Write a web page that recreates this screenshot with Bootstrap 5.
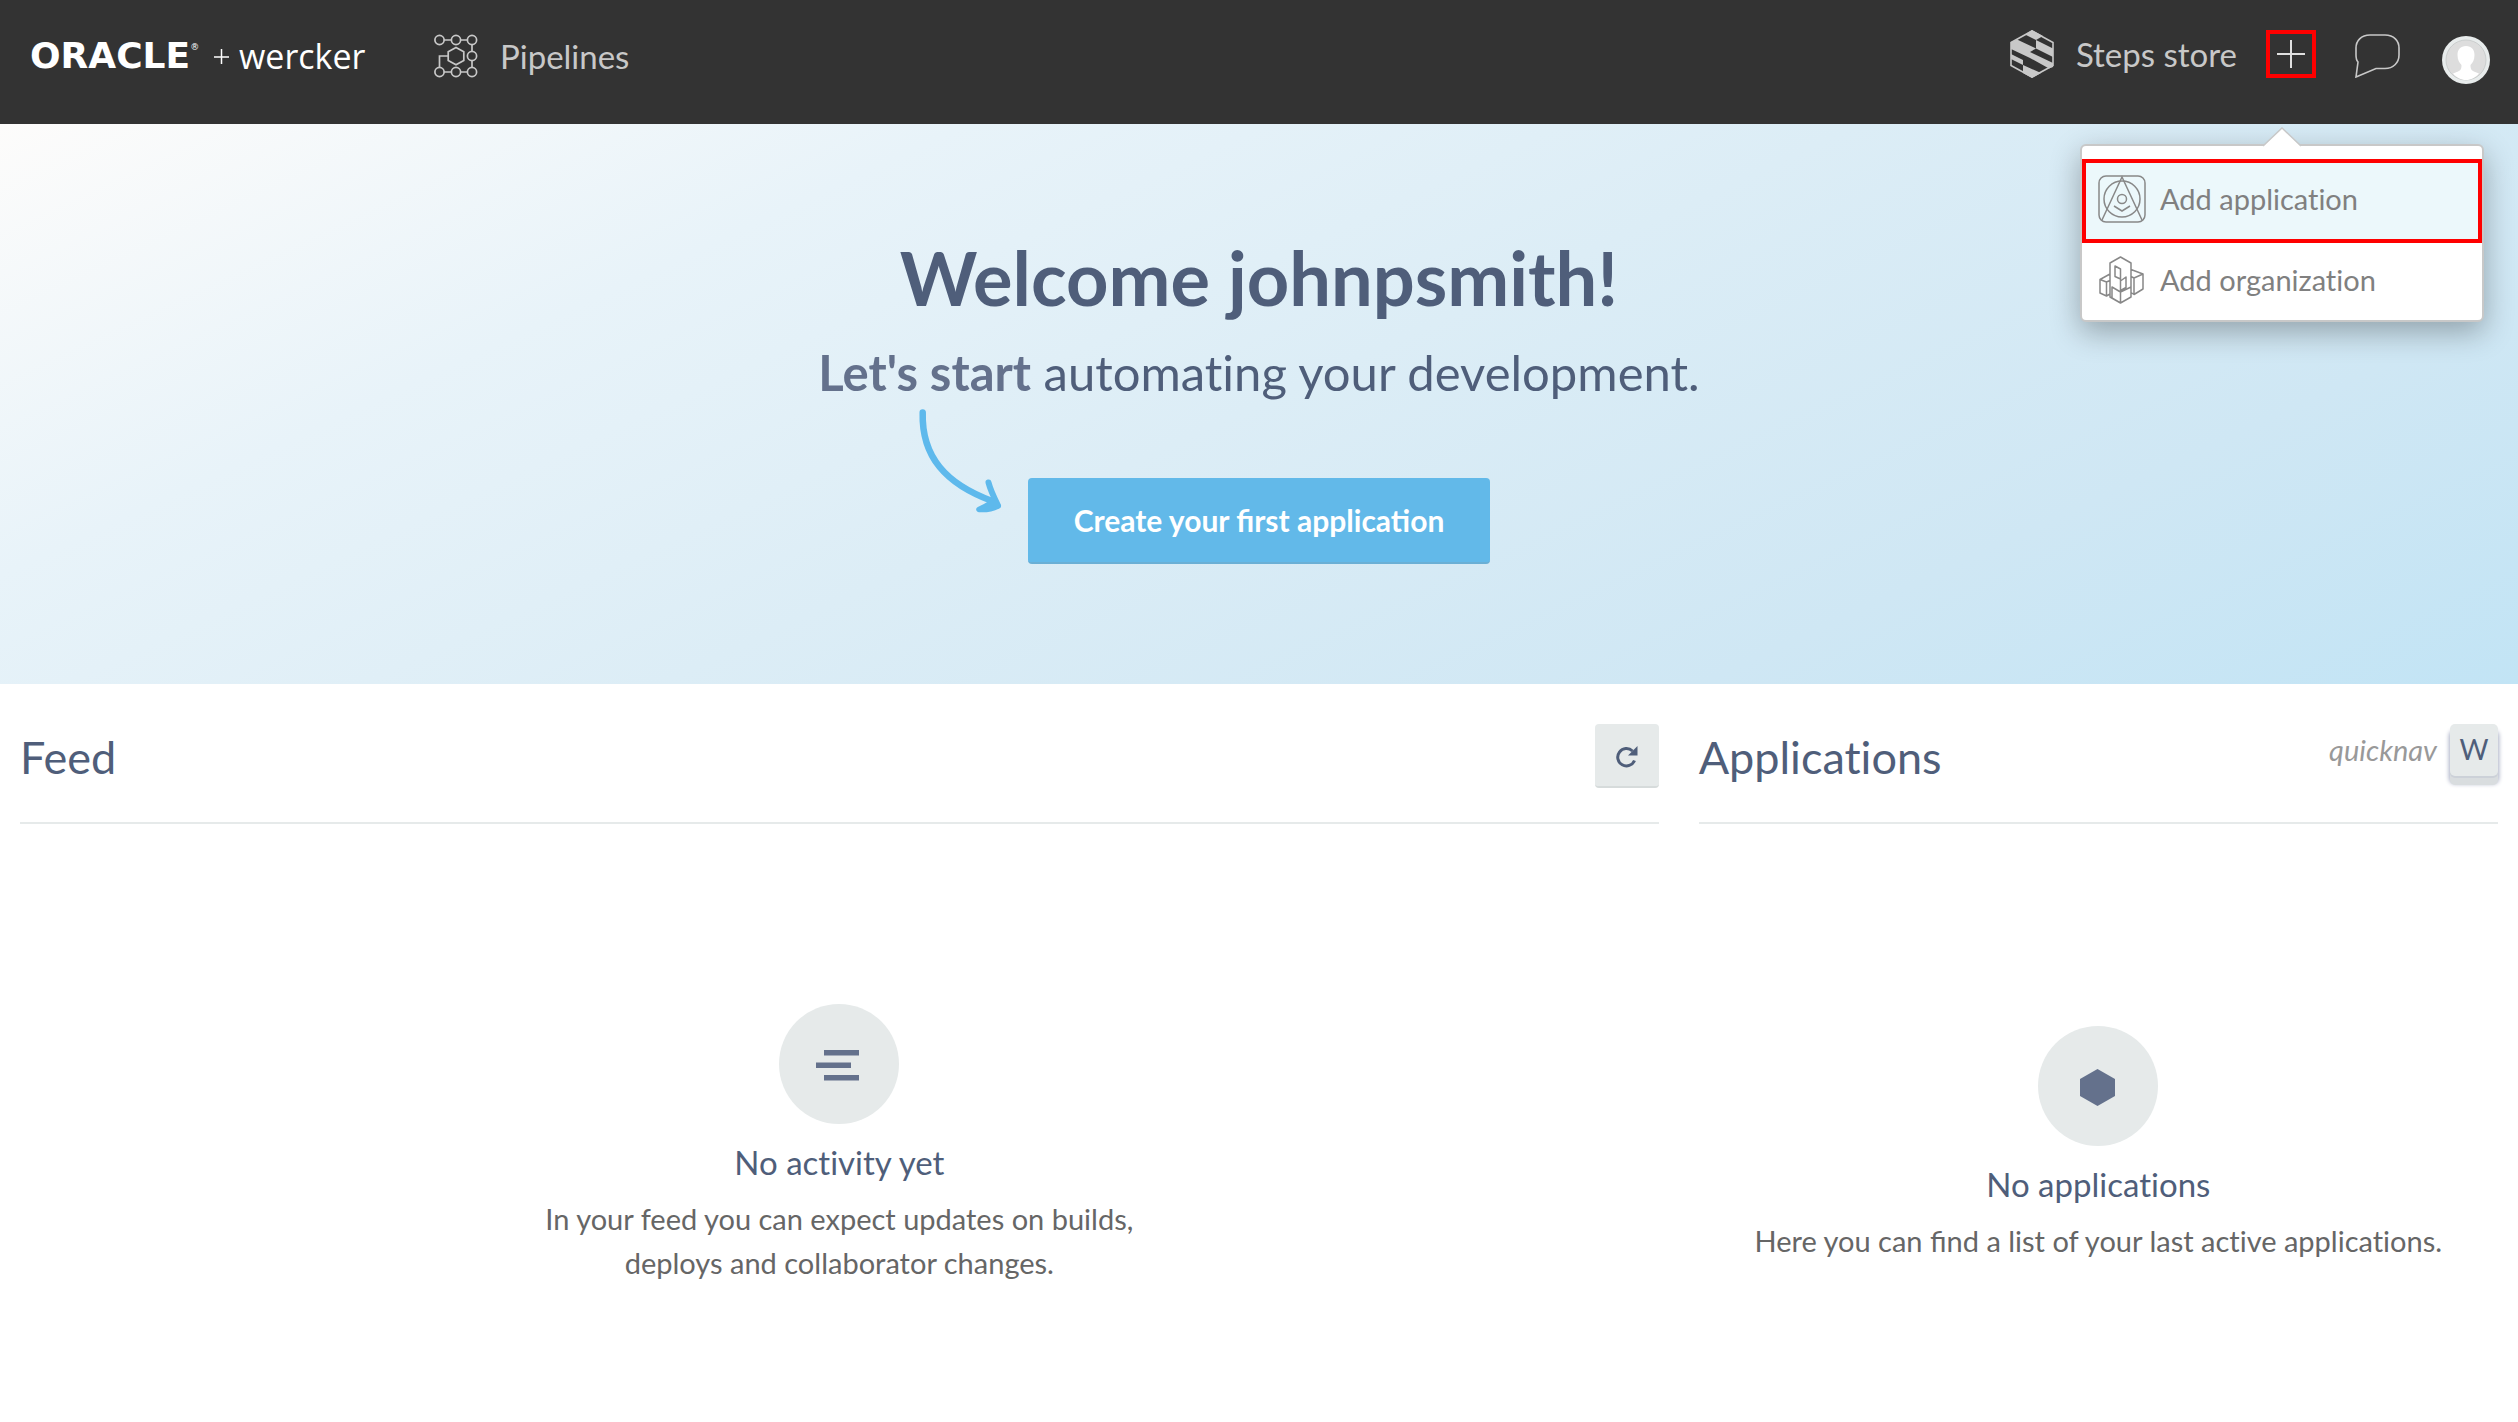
<!DOCTYPE html>
<html lang="en">
<head>
<meta charset="utf-8">
<meta name="viewport" content="width=device-width, initial-scale=1">
<title>Wercker</title>
<link href="https://cdn.jsdelivr.net/npm/bootstrap@5.3.0/dist/css/bootstrap.min.css" rel="stylesheet">
<style>
  body { font-family: Lato, "Liberation Sans", sans-serif; font-size: 29px; line-height: 44px; color: #666; background: #fff; font-variant-ligatures: none; }
  a { color: inherit; text-decoration: none; }
  svg { display: block; flex: none; }
  .with-liga { font-variant-ligatures: normal; }
  .topbar { background: #333; color: #c8c8c8; min-height: 124px; padding: 30px 28px 0 30px; font-size: 33px; line-height: 52px; }
  .brand-link { color: #fff; width: 404px; }
  .brand-oracle { font-family: "DejaVu Sans", sans-serif; font-weight: 700; font-size: 36px; width: 184px; }
  .brand-oracle sup { font-size: 9px; font-weight: 400; top: -18px; }
  .brand-wercker { font-family: "Open Sans", sans-serif; font-size: 34px; margin-left: 10px; }
  .pipe-link { gap: 22px; }
  .nav-tools { line-height: 48px; }
  .store-link { gap: 22px; margin-right: 29px; }
  .icon-btn { border: 0; padding: 0; background: none; color: #e0e0e0; }
  .add-btn { width: 50px; height: 48px; border: 4px solid #f00; display: flex; align-items: center; justify-content: center; }
  .chat-btn { margin: 4px 40px 0 38px; }
  .profile-link { margin-top: 6px; }
  .add-menu { position: absolute; top: 114px; right: -168px; width: 404px; padding-top: 13px; background: #fff; border: 2px solid #c8c8c8; border-radius: 6px; box-shadow: 0 10px 30px rgba(0,0,0,.3); }
  .menu-tip { position: absolute; top: -19px; left: 181px; }
  .menu-entry { display: flex; align-items: center; gap: 14px; height: 77px; padding: 0 16px 4px; color: #808080; font-size: 29px; }
  .menu-entry.chosen { height: 84px; padding: 0 12px 4px; background: #ecf8fb; border: 4px solid #f00; }
  .hero { min-height: 560px; padding-top: 110px; background: linear-gradient(155deg, #fdfcfb 0%, #e8f3f9 26%, #dcedf6 50%, #cfe7f4 78%, #c2e4f5 100%); color: #4f5e7a; }
  .hero h1 { font-size: 74px; line-height: 88px; font-weight: 700; margin: 0; }
  .hero-sub { font-size: 49px; line-height: 60px; margin: 20px 0 0; }
  .hero-sub strong { color: #64718c; }
  .cta { position: relative; margin-top: 76px; }
  .cta svg { position: absolute; right: 100%; bottom: 44px; margin-right: 18px; }
  .cta .btn { width: 462px; height: 86px; background: #62b9e9; color: #fff; font-size: 30px; font-weight: 700; border: 0; border-bottom: 2px solid #6aafd5; border-radius: 4px; }
  .pane { padding: 0 20px; }
  .pane-head { height: 140px; padding-top: 40px; border-bottom: 2px solid #e6eaea; }
  .pane-head h2 { font-size: 45px; line-height: 66px; font-weight: 400; color: #4f5e7a; margin: 0; }
  .reload { width: 64px; height: 64px; border: 0; border-bottom: 2px solid #d6dbdb; border-radius: 4px; background: #e6eaea; padding: 4px 0 0; display: flex; align-items: center; justify-content: center; }
  .keycap { width: 48px; height: 52px; line-height: 50px; font-size: 28px; background: #e6eaea; color: #4f5e7a; border-radius: 5px; box-shadow: 0 2px 0 #ccd1d8, 0 9px 0 #d9dddf, 0 7px 4px 1px #a8aec4; }
  .quick { font-style: italic; color: #999; line-height: 52px; margin-right: 13px; }
  .disc { width: 120px; height: 120px; border-radius: 50%; background: #e6eaea; }
  .empty-feed { padding-top: 180px; }
  .empty-apps { padding-top: 202px; }
  .empty-title { font-size: 33px; line-height: 44px; color: #4f5e7a; font-weight: 400; margin: 16px 0 13px; }
  .feed-text { max-width: 620px; }
</style>
</head>
<body>
<header class="topbar d-flex align-items-start">
  <a class="brand-link d-flex" href="#"><span class="brand-oracle">ORACLE<sup>®</sup></span>
    <svg width="15" height="52" viewBox="0 0 15 52" stroke="#fff" stroke-width="1.500"><path d="M0 27h15M7.500 19v15"/></svg>
    <span class="brand-wercker">wercker</span></a>
  <a class="pipe-link d-flex align-items-center" href="#">
    <svg width="44" height="44" viewBox="0 0 44 44" fill="none" stroke="#c8c8c8" stroke-width="1.700"><circle cx="5.500" cy="6" r="4.600"/><circle cx="22" cy="6" r="4.600"/><circle cx="38" cy="6" r="4.600"/><circle cx="38" cy="22" r="4.600"/><circle cx="5.500" cy="38" r="4.600"/><circle cx="22" cy="38" r="4.600"/><circle cx="38" cy="38" r="4.600"/><path d="M10 6h7.500M26.500 6h7M38 10.500v7M38 26.500v7M10 38h7.500M26.500 38h7M5.500 33.500V22H14M22 13.500l7.800 4.300v8.600L22 30.800l-7.800-4.400v-8.600z"/></svg>
    <span>Pipelines</span></a>
  <nav class="nav-tools ms-auto d-flex align-items-start">
    <a class="store-link d-flex" href="#">
      <svg width="44" height="48" viewBox="0 0 44 48"><path d="M22 1l21 11.500v23L22 47 1 35.500v-23z" fill="none" stroke="#c8c8c8" stroke-width="1.600"/><path d="M22 0l11 6-7 4-11-5.500zM26 10l17 8.500V27L26 18.500zM1 12l6-2.500 19 9-6 3.500v6L1 19zM20 22l23 11v4l-4 1.500L20 28zM1 24l12 6v5L1 29zM13 35l18 8-9 5-9-5z" fill="#c8c8c8"/></svg>
      <span>Steps store</span></a>
    <div class="position-relative">
      <button class="icon-btn add-btn" aria-label="Add" aria-expanded="true"><svg width="28" height="28" viewBox="0 0 28 28" stroke="#e0e0e0" stroke-width="2"><path d="M0 14h28M14 0v28"/></svg></button>
      <div class="add-menu">
        <svg class="menu-tip" width="38" height="20" viewBox="0 0 38 20"><path d="M0 19.500L19 1l19 18.500z" fill="#fff"/><path d="M0 19L19 1l19 18" fill="none" stroke="#c8c8c8" stroke-width="1.500"/></svg>
        <a class="menu-entry chosen" href="#"><svg width="48" height="48" viewBox="0 0 48 48" fill="none" stroke="#888" stroke-width="1.500"><rect x="1" y="1" width="46" height="46" rx="7"/><circle cx="24" cy="24" r="18"/><circle cx="24" cy="24" r="4.500"/><path d="M4 45L24 2l20 43M16 31l8 5 8-5"/></svg>Add application</a>
        <a class="menu-entry" href="#"><svg width="48" height="48" viewBox="0 0 48 48" fill="none" stroke="#888" stroke-width="1.500" stroke-linejoin="round"><path d="M12 41V7l10.500-6L33 7v34l-10.500 6zM17 10l5.500 3v10L17 20.500zM22.500 25l5.500-4v10.500l-5.500 3zM14 31l8.500 5v11L14 42zM22.500 36L33 31M22.500 13v12M12 18L2 23.500V37l6.500 3 3.500-2M2 23.500L8.500 26l3.500-1.500M8.500 26v14M33 13.500l12 4.500-9 4-3-1.500M45 18v15l-9 5.500-3-2M36 22v16.500"/></svg>Add organization</a>
      </div>
    </div>
    <button class="icon-btn chat-btn" aria-label="Messages"><svg width="48" height="44" viewBox="0 0 48 44" fill="none" stroke="#c8c8c8" stroke-width="1.600"><path d="M16 1h15c9 0 14 6 14 13v7c0 8-6 13.500-14 13.500h-9L2 43l2-15C2 26 2 24 2 21v-7C2 7 7 1 16 1z"/></svg></button>
    <a class="profile-link" href="#" aria-label="Profile"><svg width="48" height="48" viewBox="0 0 48 48"><circle cx="24" cy="24" r="24" fill="#e8ecec"/><circle cx="24" cy="24" r="20" fill="#ddd" stroke="#c4c8c8" stroke-width=".8"/><path d="M24 10c5.500 0 8.500 3.500 8.500 9 0 5-2 8-4 10 0 5 1 6 8.500 8.500C33.500 41.500 29 44 24 44s-9.500-2.500-13-6.500C18.500 35 19.500 34 19.500 29c-2-2-4-5-4-10 0-5.500 3-9 8.500-9z" fill="#fff"/></svg></a>
  </nav>
</header>
<section class="hero d-flex flex-column align-items-center text-center">
  <h1>Welcome johnpsmith!</h1>
  <p class="hero-sub"><strong>Let's start</strong> automating your development.</p>
  <div class="cta">
    <svg width="100" height="120" viewBox="0 0 100 120" fill="none" stroke="#5eb9ec" stroke-linecap="round" stroke-linejoin="round"><path d="M12.700 12.500C11.500 57 36 84 82 101" stroke-width="6.500"/><path d="M78.500 82.500c2 8 6 16 9.500 23" stroke-width="6"/><path d="M69 109.500c7 .500 13-.500 19-3.500l-5-5c-4 4-9 6-14 8.500z" fill="#5eb9ec" stroke-width="5.500"/></svg>
    <button class="btn">Create your <span class="with-liga">first</span> application</button>
  </div>
</section>
<main class="row g-0">
  <section class="col-8 pane">
    <div class="pane-head d-flex justify-content-between"><h2>Feed</h2>
      <button class="reload" aria-label="Refresh"><svg width="24" height="24" viewBox="0 0 24 24"><path d="M19.500 15.500A8.700 8.700 0 1 1 17.500 6" fill="none" stroke="#4f5e7a" stroke-width="3"/><path d="M22.500 1v9.500H13z" fill="#4f5e7a"/></svg></button></div>
    <div class="empty-feed d-flex flex-column align-items-center text-center">
      <div class="disc"><svg width="120" height="120" viewBox="0 0 120 120" fill="#64718c"><path d="M45 46h35v5.500H45zM37 58.500h35V64H37zM45 71h35v5.500H45z"/></svg></div>
      <h3 class="empty-title">No activity yet</h3>
      <p class="feed-text">In your feed you can expect updates on builds, deploys and collaborator changes.</p>
    </div>
  </section>
  <section class="col-4 pane">
    <div class="pane-head d-flex justify-content-between"><h2>Applications</h2>
      <div class="d-flex text-center"><span class="quick">quicknav</span><span class="keycap">W</span></div></div>
    <div class="empty-apps d-flex flex-column align-items-center text-center">
      <div class="disc"><svg width="120" height="120" viewBox="0 0 120 120" fill="#64718c"><path d="M59.500 43L77 53v17L59.500 80 42 70V53z"/></svg></div>
      <h3 class="empty-title">No applications</h3>
      <p>Here you can <span class="with-liga">find</span> a list of your last active applications.</p>
    </div>
  </section>
</main>
<script src="https://cdn.jsdelivr.net/npm/bootstrap@5.3.0/dist/js/bootstrap.bundle.min.js"></script>
</body>
</html>
